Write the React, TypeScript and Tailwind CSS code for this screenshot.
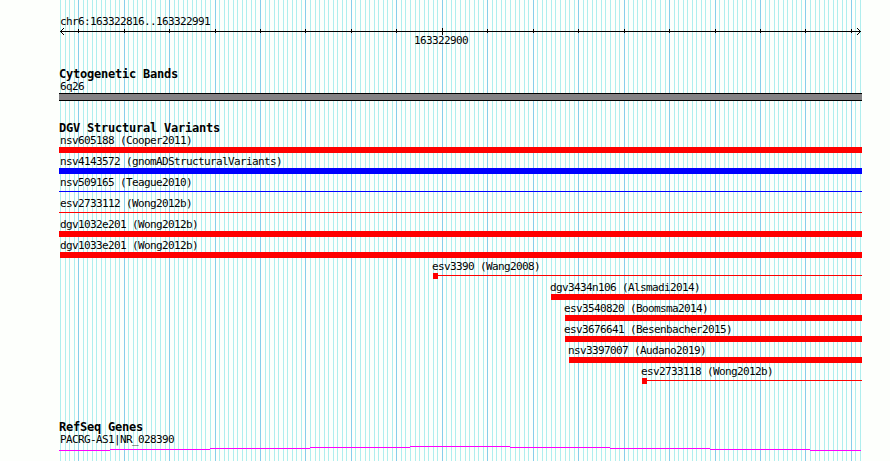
type Variant = {
  name: string;
  start: number;
  color: "red" | "blue";
  shape: "bar" | "line" | "anchored";
  labelStart: number;
};

// starts are pixels from the left edge of the panel
const variants: Variant[] = [
  { name: "nsv605188 (Cooper2011)", start: 0, labelStart: 1, color: "red", shape: "bar" },
  { name: "nsv4143572 (gnomADStructuralVariants)", start: 0, labelStart: 1, color: "blue", shape: "bar" },
  { name: "nsv509165 (Teague2010)", start: 0, labelStart: 1, color: "blue", shape: "line" },
  { name: "esv2733112 (Wong2012b)", start: 0, labelStart: 1, color: "red", shape: "line" },
  { name: "dgv1032e201 (Wong2012b)", start: 0, labelStart: 1, color: "red", shape: "bar" },
  { name: "dgv1033e201 (Wong2012b)", start: 1, labelStart: 1, color: "red", shape: "bar" },
  { name: "esv3390 (Wang2008)", start: 374, labelStart: 373, color: "red", shape: "anchored" },
  { name: "dgv3434n106 (Alsmadi2014)", start: 492, labelStart: 491, color: "red", shape: "bar" },
  { name: "esv3540820 (Boomsma2014)", start: 506, labelStart: 505, color: "red", shape: "bar" },
  { name: "esv3676641 (Besenbacher2015)", start: 506, labelStart: 505, color: "red", shape: "bar" },
  { name: "nsv3397007 (Audano2019)", start: 510, labelStart: 509, color: "red", shape: "bar" },
  { name: "esv2733118 (Wong2012b)", start: 583, labelStart: 582, color: "red", shape: "anchored" },
];

const fills: Record<Variant["color"], string> = {
  red: "bg-[#ff0000]",
  blue: "bg-[#0000ff]",
};

const FIRST_BASE = 816;
const BASES = 176;

const gridLines = Array.from({ length: BASES + 1 }, (_, i) => ({
  x: Math.round(60 + (i * 800) / BASES),
  major: (FIRST_BASE + i) % 10 === 0,
  labelled: FIRST_BASE + i === 900,
}));

const geneSteps = [
  { width: 51, drop: 4 },
  { width: 100, drop: 3 },
  { width: 100, drop: 2 },
  { width: 100, drop: 1 },
  { width: 100, drop: 0 },
  { width: 100, drop: 1 },
  { width: 100, drop: 2 },
  { width: 100, drop: 3 },
  { width: 51, drop: 4 },
];

function Grid() {
  return (
    <svg className="absolute inset-0" width="890" height="461" shapeRendering="crispEdges">
      {gridLines.map((line) => (
        <rect key={line.x} x={line.x} y="0" width="1" height="461" fill={line.major ? "#87ceeb" : "#afeeee"} />
      ))}
    </svg>
  );
}

function Ruler() {
  return (
    <svg className="block" width="803" height="7" viewBox="59 0 803 7" shapeRendering="crispEdges">
      <rect x="60" y="3" width="801" height="1" />
      {gridLines
        .filter((line) => line.major)
        .map((line) => (
          <rect key={line.x} x={line.x} y={line.labelled ? 0 : 1} width="1" height={line.labelled ? 7 : 4} />
        ))}
      {[1, 2, 3].map((d) => (
        <g key={d}>
          <rect x={60 + d} y={3 - d} width="1" height="1" />
          <rect x={60 + d} y={3 + d} width="1" height="1" />
          <rect x={860 - d} y={3 - d} width="1" height="1" />
          <rect x={860 - d} y={3 + d} width="1" height="1" />
        </g>
      ))}
    </svg>
  );
}

function Label({ children }: { children: string }) {
  return <div className="h-3 pl-px text-[11px] leading-3 tracking-[-0.622px] whitespace-pre">{children}</div>;
}

function Heading({ children }: { children: string }) {
  return <h2 className="h-[13px] text-[12px] leading-3 font-bold tracking-[-0.224px] whitespace-pre">{children}</h2>;
}

function VariantRow({ variant }: { variant: Variant }) {
  const fill = fills[variant.color];
  return (
    <div className="flex h-[21px] flex-col">
      <div
        className="h-3 text-[11px] leading-3 tracking-[-0.622px] whitespace-pre"
        style={{ paddingLeft: variant.labelStart }}
      >
        {variant.name}
      </div>
      <div className="flex h-1.5 items-start" style={{ paddingLeft: variant.start }}>
        {variant.shape === "anchored" && <div className={`h-1.5 w-[5px] ${fill}`} />}
        <div className={`grow ${fill} ${variant.shape === "bar" ? "h-1.5" : "mt-0.5 h-px"}`} />
      </div>
    </div>
  );
}

export default function App() {
  return (
    <div className="relative h-[461px] w-[890px] overflow-hidden bg-[#fdfffc] font-['DejaVu_Sans_Mono',monospace] text-black">
      <Grid />
      <main className="relative ml-[59px] flex w-[803px] flex-col pt-4">
        <header>
          <Label>chr6:163322816..163322991</Label>
          <Ruler />
          <div className="pl-[354px]">
            <Label>163322900</Label>
          </div>
        </header>

        <section className="mt-[21px]">
          <Heading>Cytogenetic Bands</Heading>
          <Label>6q26</Label>
          <div className="h-2 border-y border-black bg-[#848284]" />
        </section>

        <section className="mt-[21px]">
          <Heading>DGV Structural Variants</Heading>
          {variants.map((variant) => (
            <VariantRow key={variant.name} variant={variant} />
          ))}
        </section>

        <section className="mt-[34px]">
          <Heading>RefSeq Genes</Heading>
          <Label>PACRG-AS1|NR_028390</Label>
          <div className="flex h-[5px]">
            {geneSteps.map((step, i) => (
              <div key={i} className="h-px bg-[#ff00ff]" style={{ width: step.width, marginTop: step.drop }} />
            ))}
          </div>
        </section>
      </main>
    </div>
  );
}
